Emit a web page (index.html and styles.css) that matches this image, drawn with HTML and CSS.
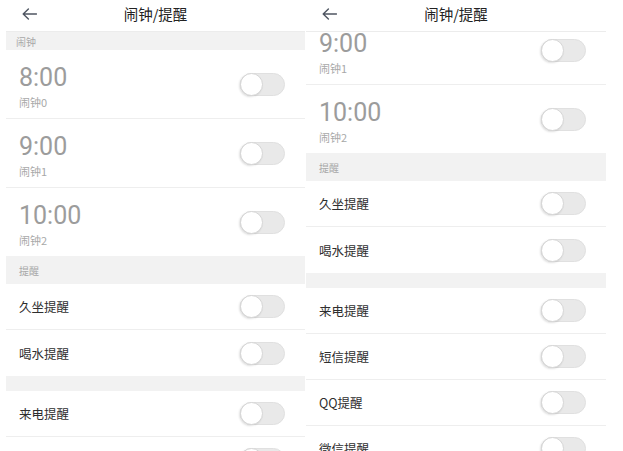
FILE: index.html
```html
<!DOCTYPE html>
<html lang="zh">
<head>
<meta charset="utf-8">
<title>闹钟/提醒</title>
<link rel="stylesheet" href="styles.css">
</head>
<body>
<div class="screens">
  <section class="phone">
    <header class="bar">
      <svg class="back" width="15" height="12" viewBox="0 0 15 12"><path d="M14.5 6H1.2M6.4 0.9L1.2 6l5.2 5.1" fill="none" stroke="#4f5662" stroke-width="1.4" stroke-linecap="round" stroke-linejoin="round"/></svg>
      <h1 class="title">闹钟/提醒</h1>
      <span></span>
    </header>
    <div class="viewport">
      <div class="list">
        <div class="group-head group-head--alarm">闹钟</div>
        <div class="alarm"><div class="alarm-text"><div class="time">8:00</div><div class="sub">闹钟0</div></div><span class="switch"></span></div>
        <div class="alarm"><div class="alarm-text"><div class="time">9:00</div><div class="sub">闹钟1</div></div><span class="switch"></span></div>
        <div class="alarm alarm--last"><div class="alarm-text"><div class="time">10:00</div><div class="sub">闹钟2</div></div><span class="switch"></span></div>
        <div class="group-head group-head--remind">提醒</div>
        <div class="item"><span class="label">久坐提醒</span><span class="switch"></span></div>
        <div class="item item--last"><span class="label">喝水提醒</span><span class="switch"></span></div>
        <div class="spacer"></div>
        <div class="item"><span class="label">来电提醒</span><span class="switch"></span></div>
        <div class="item"><span class="label">短信提醒</span><span class="switch"></span></div>
        <div class="item"><span class="label">QQ提醒</span><span class="switch"></span></div>
        <div class="item"><span class="label">微信提醒</span><span class="switch"></span></div>
      </div>
    </div>
  </section>
  <section class="phone phone--scrolled">
    <header class="bar">
      <svg class="back" width="15" height="12" viewBox="0 0 15 12"><path d="M14.5 6H1.2M6.4 0.9L1.2 6l5.2 5.1" fill="none" stroke="#4f5662" stroke-width="1.4" stroke-linecap="round" stroke-linejoin="round"/></svg>
      <h1 class="title">闹钟/提醒</h1>
      <span></span>
    </header>
    <div class="viewport">
      <div class="list">
        <div class="group-head group-head--alarm">闹钟</div>
        <div class="alarm"><div class="alarm-text"><div class="time">8:00</div><div class="sub">闹钟0</div></div><span class="switch"></span></div>
        <div class="alarm"><div class="alarm-text"><div class="time">9:00</div><div class="sub">闹钟1</div></div><span class="switch"></span></div>
        <div class="alarm alarm--last"><div class="alarm-text"><div class="time">10:00</div><div class="sub">闹钟2</div></div><span class="switch"></span></div>
        <div class="group-head group-head--remind">提醒</div>
        <div class="item"><span class="label">久坐提醒</span><span class="switch"></span></div>
        <div class="item item--last"><span class="label">喝水提醒</span><span class="switch"></span></div>
        <div class="spacer"></div>
        <div class="item"><span class="label">来电提醒</span><span class="switch"></span></div>
        <div class="item"><span class="label">短信提醒</span><span class="switch"></span></div>
        <div class="item"><span class="label">QQ提醒</span><span class="switch"></span></div>
        <div class="item"><span class="label">微信提醒</span><span class="switch"></span></div>
      </div>
    </div>
  </section>
</div>
</body>
</html>
```

FILE: styles.css
```css
html, body {
  margin: 0;
  padding: 0;
  background: #fff;
}
body {
  font-family: Roboto, "Noto Sans CJK SC", sans-serif;
  width: 623px;
  height: 451px;
  overflow: hidden;
}
.screens {
  display: flex;
  gap: 1px;
  padding-left: 6px;
  height: 451px;
}
.phone {
  width: 299px;
  display: flex;
  flex-direction: column;
  height: 451px;
}
.phone--scrolled {
  width: 300px;
}
.bar {
  height: 31px;
  border-bottom: 1px solid #ececec;
  display: grid;
  grid-template-columns: 1fr auto 1fr;
  align-items: center;
  background: #fff;
}
.back {
  margin-left: 16px;
  margin-top: -3px;
}
.title {
  margin: 0;
  font-family: "Noto Sans CJK SC", sans-serif;
  font-size: 14.5px;
  font-weight: 400;
  color: #222;
  line-height: 20px;
  margin-top: -3px;
}
.viewport {
  flex: 1;
  overflow: hidden;
}
.phone--scrolled .list {
  margin-top: -103px;
}
.group-head {
  background: #f2f2f2;
  font-family: "Noto Sans CJK SC", sans-serif;
  font-size: 10px;
  color: #a8a8a8;
  display: flex;
  align-items: center;
}
.group-head--alarm {
  height: 18px;
  padding-left: 10px;
}
.group-head--remind {
  height: 28px;
  padding-left: 13px;
}
.alarm {
  height: 69px;
  box-sizing: border-box;
  border-bottom: 1px solid #eeeeee;
  display: flex;
  justify-content: space-between;
  align-items: center;
  padding: 0 20px 0 13px;
}
.alarm--last {
  height: 68px;
  border-bottom: none;
}
.alarm-text {
  align-self: flex-start;
  padding-top: 14px;
}
.time {
  font-family: Roboto, sans-serif;
  font-size: 25px;
  line-height: 28px;
  color: #9c9c9c;
}
.sub {
  margin-top: 3px;
  font-family: "Noto Sans CJK SC", sans-serif;
  font-size: 11px;
  line-height: 14px;
  color: #a8a8a8;
}
.item {
  height: 46px;
  box-sizing: border-box;
  border-bottom: 1px solid #eeeeee;
  display: flex;
  justify-content: space-between;
  align-items: center;
  padding: 0 20px 0 13px;
}
.item--last {
  border-bottom: none;
}
.label {
  font-family: "Noto Sans CJK SC", sans-serif;
  font-size: 12.5px;
  color: #2e2e2e;
}
.spacer {
  height: 15px;
  background: #f2f2f2;
}
.switch {
  position: relative;
  width: 45px;
  height: 23px;
  box-sizing: border-box;
  border-radius: 12px;
  background: #e9e9e9;
  border: 1px solid #e0e0e0;
  flex: none;
}
.switch::before {
  content: "";
  position: absolute;
  left: -1px;
  top: -1px;
  width: 23px;
  height: 23px;
  box-sizing: border-box;
  border-radius: 50%;
  background: #fff;
  border: 1px solid #d6d6d6;
  box-shadow: -1px 1px 2px rgba(0, 0, 0, 0.12);
}
```
